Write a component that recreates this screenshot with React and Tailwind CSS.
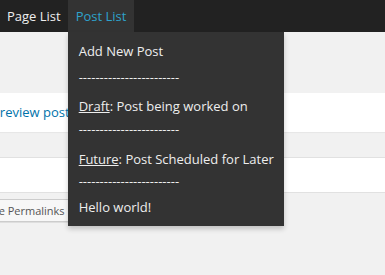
export default function App() {
  const dashes = '------------------------'

  return (
    <div className="h-[275px] w-[385px] overflow-hidden bg-[#f1f1f1] text-[13px] font-['Open_Sans',sans-serif]">
      <div className="flex h-8 bg-[#222] leading-8 text-[#eee]">
        <div className="px-[7px]">Page List</div>
        <div className="relative bg-[#333] px-[8px] text-[#2ea2cc]">
          Post List
          <div className="absolute left-0 top-8 z-10 w-[216px] bg-[#333] pb-[6px] pl-[11px] pt-[6px] leading-[26px] text-[#eee] shadow-[0_3px_5px_rgba(0,0,0,0.2)]">
            <div className="h-[26px]">Add New Post</div>
            <div className="h-[29px]">{dashes}</div>
            <div className="h-[23px]">
              <span className="underline">Draft</span>: Post being worked on
            </div>
            <div className="h-[30px]">{dashes}</div>
            <div className="h-[22px]">
              <span className="underline">Future</span>: Post Scheduled for Later
            </div>
            <div className="h-[26px]">{dashes}</div>
            <div className="h-[26px]">Hello world!</div>
          </div>
        </div>
      </div>

      <div className="mt-[61px] h-[39px] bg-white leading-[39px] shadow-[0_1px_1px_rgba(0,0,0,0.04)]">
        <a className="-ml-[8px] text-[#0073aa]">Preview post</a>
      </div>

      <div className="mt-[25px] h-[36px] border-y border-[#e1e1e1] bg-white" />

      <div className="mt-[6px] flex">
        <button className="-ml-[28px] h-[23px] rounded-[3px] border border-[#ccc] bg-[#f7f7f7] px-[8px] text-[11px] leading-[21px] text-[#555] shadow-[0_1px_0_rgba(0,0,0,0.08)]">
          Save Permalinks
        </button>
      </div>
    </div>
  )
}
